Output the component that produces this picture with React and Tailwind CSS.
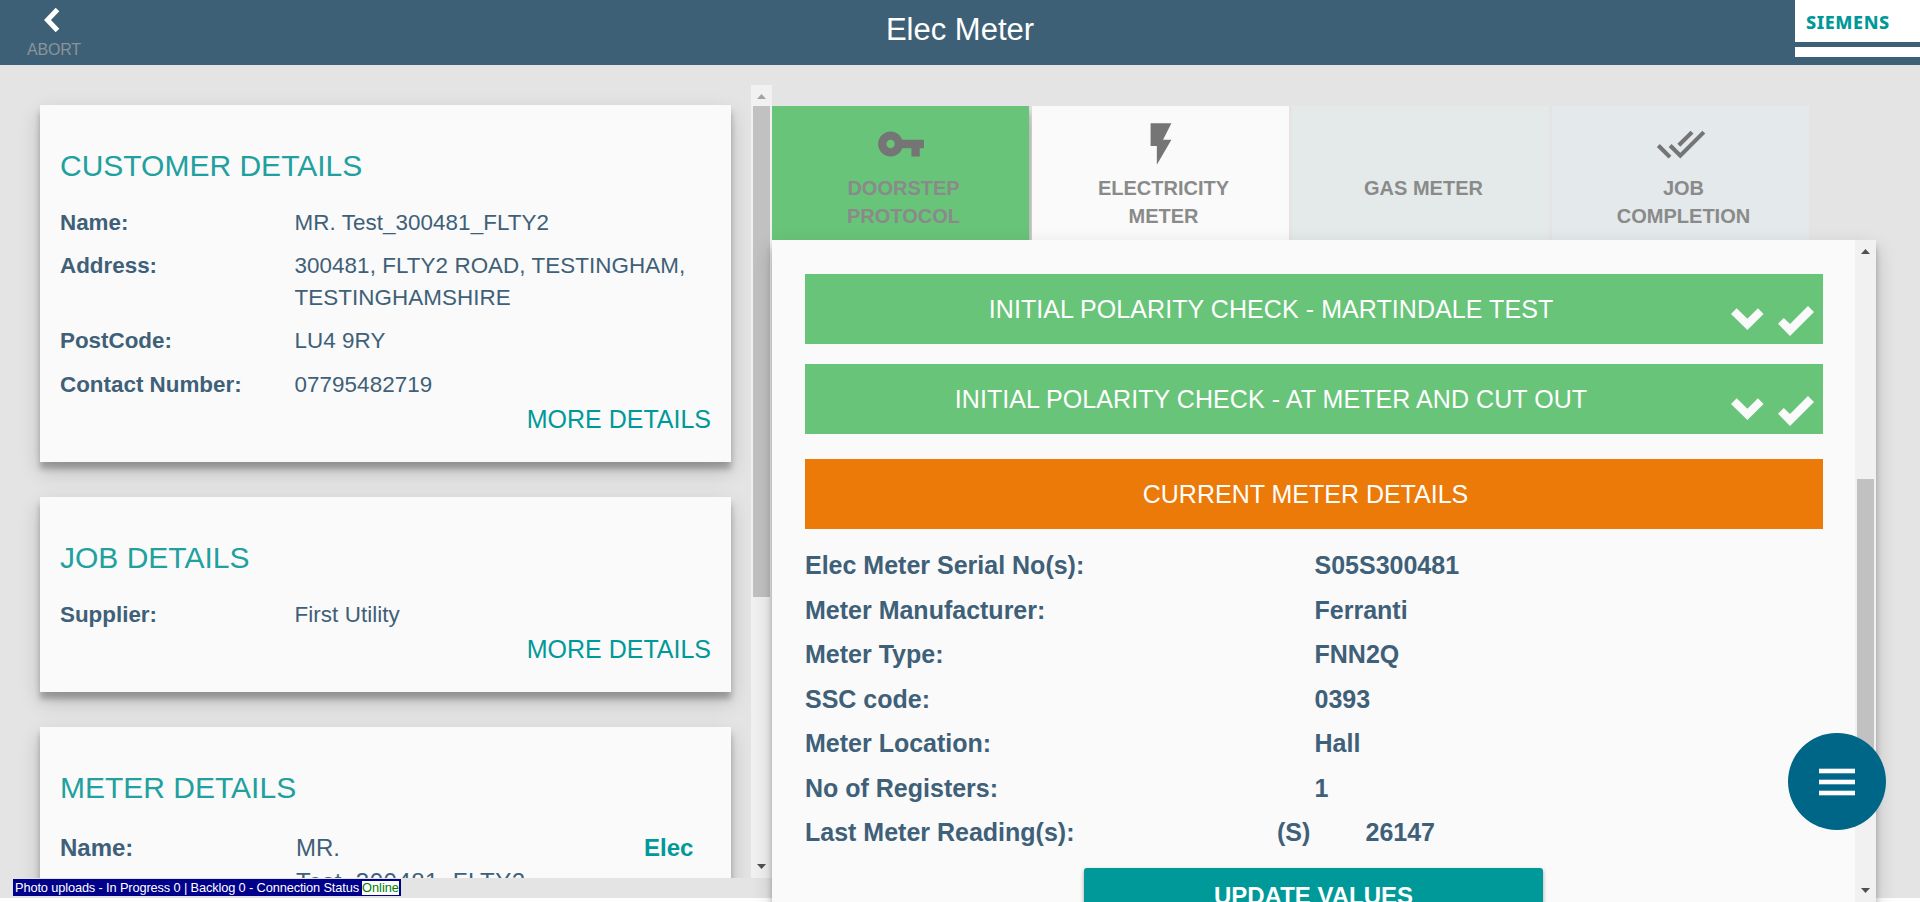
import React from "react";
import { MdVpnKey, MdFlashOn, MdDoneAll } from "react-icons/md";

const CARD_SHADOW =
  "shadow-[0_9px_20px_0_rgba(0,0,0,0.18),0_7px_6px_0_rgba(0,0,0,0.25)]";

function Heading({ children }) {
  return (
    <h2 className="h-[40px] text-[30px] leading-[40px] font-normal text-[#21a0a0]">
      {children}
    </h2>
  );
}

function Row({ label, children, height }) {
  return (
    <div className={`flex text-[22.4px] leading-[32px] ${height}`}>
      <div className="w-[234.5px] shrink-0 font-bold">{label}</div>
      <div className="tracking-[0.07px] whitespace-pre">{children}</div>
    </div>
  );
}

function More() {
  return (
    <div className="text-right text-[25px] leading-[36px] text-[#009999]">MORE DETAILS</div>
  );
}

function Arrow({ down, color }) {
  return (
    <svg width="9" height="5" viewBox="0 0 9 5" className={color} fill="currentColor">
      <path d={down ? "M0 0H9L4.5 5Z" : "M0 5H9L4.5 0Z"} />
    </svg>
  );
}

function Scrollbar({ className, thumb, upColor }) {
  return (
    <div className={`flex w-[21px] shrink-0 flex-col items-center bg-[#f1f1f1] ${className}`}>
      <div className="flex h-[21px] shrink-0 justify-center pt-[9px]">
        <Arrow color={upColor} />
      </div>
      <div className={`w-[17px] shrink-0 bg-[#c1c1c1] ${thumb}`} />
      <div className="mt-auto pb-[9px]">
        <Arrow down color="text-[#505050]" />
      </div>
    </div>
  );
}

function Tab({ className, icon, lines }) {
  return (
    <div className={`flex h-[134px] w-[257px] shrink-0 flex-col items-center pt-[13px] ${className}`}>
      <div className="h-[50px] w-[50px] text-[#757575]">{icon}</div>
      <div className="mt-[5px] pl-[6px] text-center text-[20px] leading-[28px] font-bold text-[#8a8a8a]">
        {lines.map((l) => (
          <div key={l}>{l}</div>
        ))}
      </div>
    </div>
  );
}

function Bar({ children }) {
  return (
    <div className="flex h-[70px] items-center bg-[#68c479] pr-[9px] text-white">
      <div className="flex-1 pl-[6px] text-center text-[25px] leading-[36px] tracking-[0.07px]">{children}</div>
      <svg width="33" height="22" viewBox="0 0 33 22" className="mt-[20px] text-[#fafafa]" fill="currentColor">
        <path d="M0 6 5.7 0.2 16.4 10.7 26.9 0.2 32.6 6 16.4 22Z" />
      </svg>
      <svg width="36" height="30" viewBox="0 0 36 30" className="mt-[24px] ml-[14px] text-[#fafafa]" fill="currentColor">
        <path d="M0 17.8 5.8 12 12 18 30 0 36 6 12 30Z" />
      </svg>
    </div>
  );
}

const DETAILS = [
  ["Elec Meter Serial No(s):", "S05S300481"],
  ["Meter Manufacturer:", "Ferranti"],
  ["Meter Type:", "FNN2Q"],
  ["SSC code:", "0393"],
  ["Meter Location:", "Hall"],
  ["No of Registers:", "1"],
];

export default function App() {
  return (
    <div className="relative h-[902px] w-[1920px] overflow-hidden bg-white font-['Liberation_Sans',Arial,sans-serif] text-[#3e6078]">
      <div className="flex h-[898px] flex-col bg-[#e4e4e4]">
        <header className="flex h-[65px] shrink-0 justify-between bg-[#3e6076]">
          <div className="flex w-[125px] flex-col pl-[27px]">
            <svg width="17" height="26" viewBox="0 0 17 26" className="mt-[7px] ml-[16px]" fill="none" stroke="#fff" strokeWidth="5">
              <path d="M14.5 2.5 4.5 13 14.5 23.5" />
            </svg>
            <div className="mt-[6px] text-[16px] leading-[22px] tracking-[-0.2px] text-[#8b9499]">ABORT</div>
          </div>
          <h1 className="pt-[9px] text-[31px] leading-[42px] font-normal text-white">Elec Meter</h1>
          <div className="flex w-[125px] flex-col gap-[5px]">
            <div className="h-[42px] bg-white pt-[10px] pl-[11px] font-['Noto_Sans',sans-serif] text-[18px] leading-[24px] font-extrabold tracking-[0.6px] text-[#009999]">
              SIEMENS
            </div>
            <div className="h-[10px] bg-white" />
          </div>
        </header>

        <main className="flex">
          <section className="mt-[20px] flex h-[793px] w-[772px] shrink-0 overflow-hidden">
            <div className="flex w-[751px] flex-col gap-[35px] pt-[20px] pr-[20px] pl-[40px]">
              <div className={`h-[357px] shrink-0 bg-[#fafafa] px-[20px] pt-[41px] ${CARD_SHADOW}`}>
                <Heading>CUSTOMER DETAILS</Heading>
                <div className="pt-[21px]">
                  <Row label="Name:" height="h-[43px]">MR. Test_300481_FLTY2</Row>
                  <Row label="Address:" height="h-[75px]">{"300481, FLTY2 ROAD, TESTINGHAM,\nTESTINGHAMSHIRE"}</Row>
                  <Row label="PostCode:" height="h-[44px]">LU4 9RY</Row>
                  <Row label="Contact Number:" height="h-[32px]">07795482719</Row>
                </div>
                <More />
              </div>
              <div className={`h-[195px] shrink-0 bg-[#fafafa] px-[20px] pt-[41px] ${CARD_SHADOW}`}>
                <Heading>JOB DETAILS</Heading>
                <div className="pt-[21px]">
                  <Row label="Supplier:" height="h-[32px]">First Utility</Row>
                </div>
                <More />
              </div>
              <div className={`h-[300px] shrink-0 bg-[#fafafa] px-[20px] pt-[41px] ${CARD_SHADOW}`}>
                <Heading>METER DETAILS</Heading>
                <div className="flex pt-[23px] text-[24px] leading-[34px]">
                  <div className="w-[236px] font-bold">Name:</div>
                  <div className="w-[348px]">
                    MR.
                    <div className="tracking-[0.5px]">Test_300481_FLTY2</div>
                  </div>
                  <div className="font-bold text-[#009999]">Elec</div>
                </div>
              </div>
            </div>
            <Scrollbar className="h-[793px]" thumb="h-[491px]" upColor="text-[#a3a3a3]" />
          </section>

          <section className="w-[1104px] shrink-0 pt-[41px]">
            <div className="flex gap-[3px] overflow-hidden">
              <Tab className={`bg-[#68c479] ${CARD_SHADOW}`} icon={<MdVpnKey size={50} />} lines={["DOORSTEP", "PROTOCOL"]} />
              <Tab className="relative bg-[#fafafa]" icon={<MdFlashOn size={50} />} lines={["ELECTRICITY", "METER"]} />
              <Tab className="bg-[#e4eaea]" lines={["GAS METER"]} />
              <Tab className="bg-[#e4e9eb]" icon={<MdDoneAll size={50} />} lines={["JOB", "COMPLETION"]} />
            </div>
            <div className={`relative flex h-[662px] bg-[#fafafa] ${CARD_SHADOW}`}>
              <div className="w-[1083px] pt-[34px] pr-[32px] pl-[33px]">
                <div className="flex flex-col gap-[20px]">
                  <Bar>INITIAL POLARITY CHECK - MARTINDALE TEST</Bar>
                  <Bar>INITIAL POLARITY CHECK - AT METER AND CUT OUT</Bar>
                </div>
                <div className="mt-[25px] flex h-[70px] items-center justify-center bg-[#ec7a08] pr-[17px] text-[25px] leading-[36px] text-white">
                  CURRENT METER DETAILS
                </div>
                <div className="pt-[18px] text-[25px] leading-[36px] font-bold">
                  {DETAILS.map(([k, v]) => (
                    <div key={k} className="flex h-[44.5px]">
                      <div className="w-[509.5px]">{k}</div>
                      <div>{v}</div>
                    </div>
                  ))}
                  <div className="flex h-[44.5px]">
                    <div className="w-[472px]">Last Meter Reading(s):</div>
                    <div className="w-[88.5px]">(S)</div>
                    <div>26147</div>
                  </div>
                </div>
                <div className="mt-[9px] ml-[279px] flex h-[56px] w-[459px] items-center justify-center rounded-[3px] bg-[#009999] text-[24px] font-bold text-white shadow-[0_2px_4px_rgba(0,0,0,0.35)]">
                  UPDATE VALUES
                </div>
              </div>
              <Scrollbar className="h-[662px]" thumb="mt-[218px] h-[290px]" upColor="text-[#505050]" />
            </div>
          </section>
        </main>
      </div>

      <div className="absolute top-[879px] left-[13px] flex h-[17px] items-center bg-[#00008b] px-[2px] text-[12.8px] leading-[14px] text-white">
        <span className="mr-[3px] tracking-[-0.13px]">
          Photo uploads - In Progress 0 | Backlog 0 - Connection Status
        </span>
        <span className="bg-white text-[#008000]">Online</span>
      </div>

      <button className="absolute top-[733px] left-[1788.3px] flex h-[97.3px] w-[97.3px] items-center justify-center rounded-full bg-[#006688]">
        <svg width="36" height="28" viewBox="0 0 36 28" fill="#fff">
          <rect y="0.7" width="36" height="4.6" />
          <rect y="11.7" width="36" height="4.6" />
          <rect y="22.7" width="36" height="4.6" />
        </svg>
      </button>
    </div>
  );
}
